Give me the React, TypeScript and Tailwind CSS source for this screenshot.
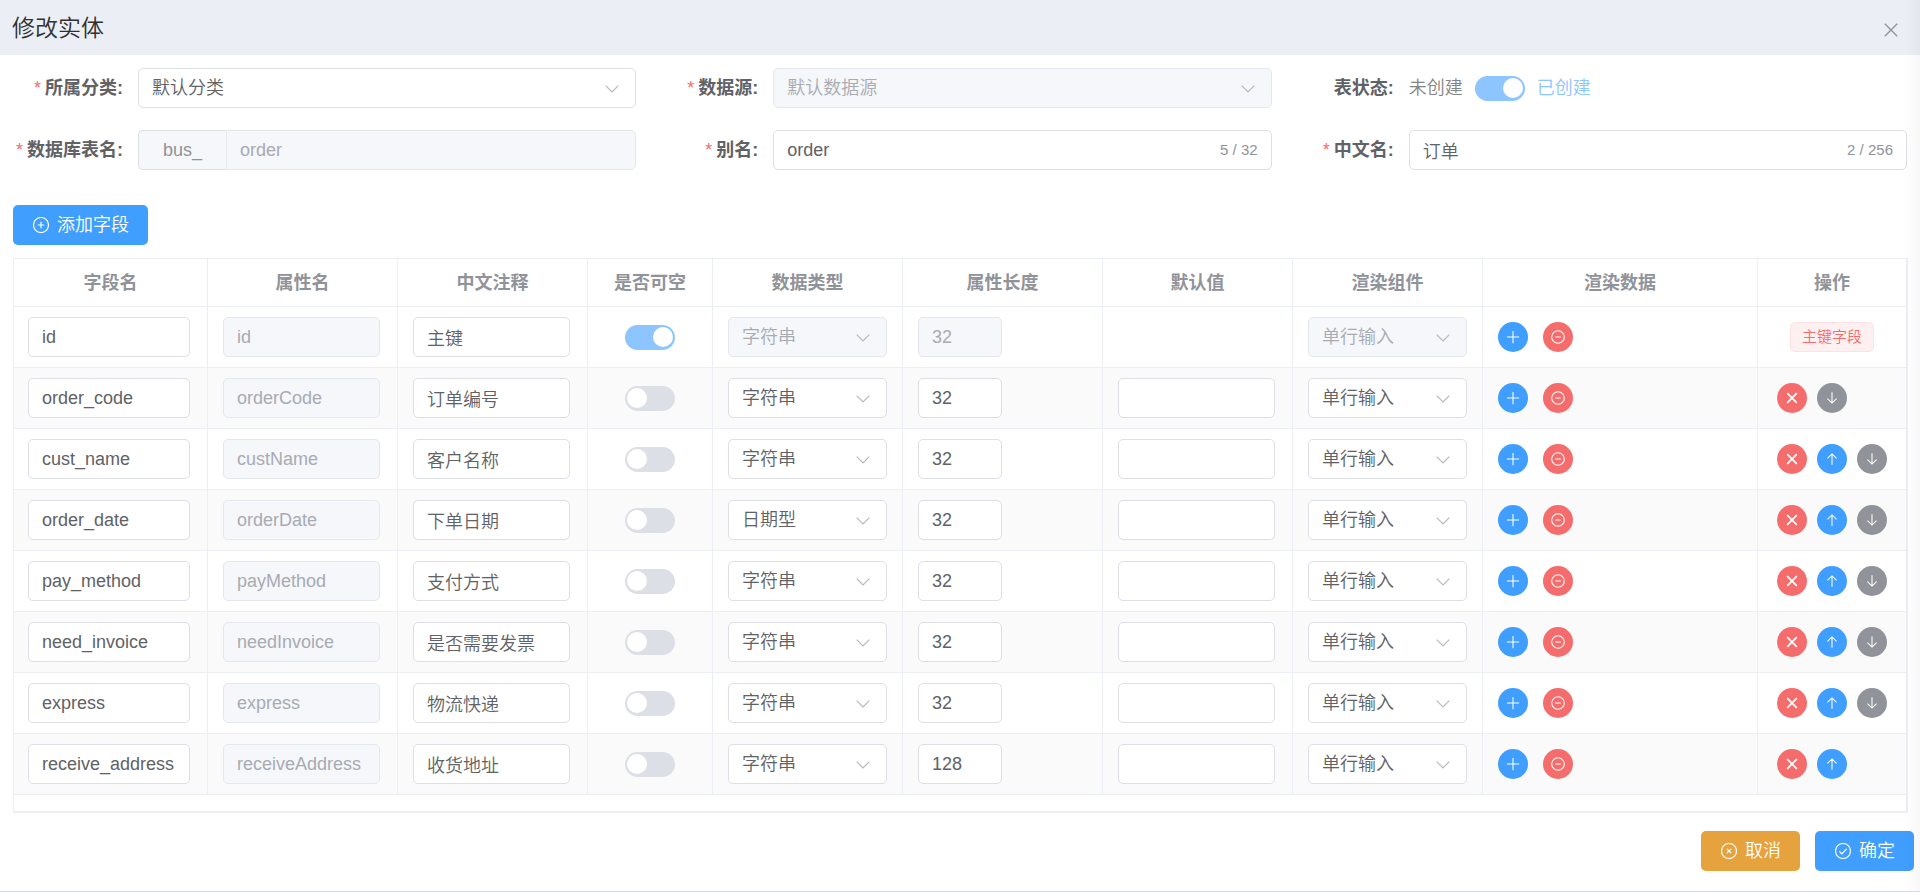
import type { ReactNode } from 'react';

type Field = {
  column: string;
  prop: string;
  comment: string;
  type: string;
  length: string;
};

const FIELDS: Field[] = [
  { column: 'id',              prop: 'id',             comment: '主键',         type: '字符串', length: '32' },
  { column: 'order_code',      prop: 'orderCode',      comment: '订单编号',     type: '字符串', length: '32' },
  { column: 'cust_name',       prop: 'custName',       comment: '客户名称',     type: '字符串', length: '32' },
  { column: 'order_date',      prop: 'orderDate',      comment: '下单日期',     type: '日期型', length: '32' },
  { column: 'pay_method',      prop: 'payMethod',      comment: '支付方式',     type: '字符串', length: '32' },
  { column: 'need_invoice',    prop: 'needInvoice',    comment: '是否需要发票', type: '字符串', length: '32' },
  { column: 'express',         prop: 'express',        comment: '物流快递',     type: '字符串', length: '32' },
  { column: 'receive_address', prop: 'receiveAddress', comment: '收货地址',     type: '字符串', length: '128' },
];

const COLUMNS = [
  { title: '字段名',   width: 'w-[194px]' },
  { title: '属性名',   width: 'w-[190px]' },
  { title: '中文注释', width: 'w-[190px]' },
  { title: '是否可空', width: 'w-[125px]' },
  { title: '数据类型', width: 'w-[190px]' },
  { title: '属性长度', width: 'w-[200px]' },
  { title: '默认值',   width: 'w-[190px]' },
  { title: '渲染组件', width: 'w-[190px]' },
  { title: '渲染数据', width: 'w-[275px]' },
  { title: '操作',     width: 'w-[148px]' },
];

const ICONS = {
  plus: 'M8 1v14M1 8h14',
  close: 'M2.5 2.5l11 11M13.5 2.5l-11 11',
  up: 'M8 14.5V2.2M2.8 7.4L8 2.2l5.2 5.2',
  down: 'M8 1.5v12.3M2.8 8.6L8 13.8l5.2-5.2',
  circlePlus: 'M8 .5a7.5 7.5 0 100 15 7.5 7.5 0 000-15zM8 4.8v6.4M4.8 8h6.4',
  circleMinus: 'M8 .8a7.2 7.2 0 100 14.4 7.2 7.2 0 000-14.4zM4.8 8h6.4',
  circleClose: 'M8 .5a7.5 7.5 0 100 15 7.5 7.5 0 000-15zM5.8 5.8l4.4 4.4M10.2 5.8l-4.4 4.4',
  circleCheck: 'M8 .5a7.5 7.5 0 100 15 7.5 7.5 0 000-15zM4.4 8.3l2.5 2.6 4.8-5',
};

function Icon({ name, className = 'size-4', stroke = 1.2 }: { name: keyof typeof ICONS; className?: string; stroke?: number }) {
  return (
    <svg viewBox="0 0 16 16" className={className} fill="none" stroke="currentColor" strokeWidth={stroke} aria-hidden="true">
      <path d={ICONS[name]} />
    </svg>
  );
}

function TextBox({ id, label, value, disabled, className = 'w-full' }: {
  id?: string; label?: string; value: string; disabled?: boolean; className?: string;
}) {
  return (
    <input
      id={id}
      aria-label={label}
      type="text"
      defaultValue={value}
      disabled={disabled}
      className={`block h-10 rounded-[5px] border border-[#dcdfe6] bg-white px-[13px] text-[#606266] outline-none disabled:border-[#e4e7ed] disabled:bg-[#f5f7fa] disabled:text-[#a8abb2] ${className}`}
    />
  );
}

function Select({ id, label, value, disabled }: { id?: string; label?: string; value: string; disabled?: boolean }) {
  return (
    <div className="relative">
      <select
        id={id}
        aria-label={label}
        defaultValue={value}
        disabled={disabled}
        className="block h-10 w-full appearance-none rounded-[5px] border border-[#dcdfe6] bg-white pl-[13px] pr-10 text-[#606266] opacity-100 outline-none disabled:border-[#e4e7ed] disabled:bg-[#f5f7fa] disabled:text-[#a8abb2]"
      >
        <option>{value}</option>
      </select>
      <svg viewBox="0 0 14 8" className="pointer-events-none absolute right-[17px] top-[17px] h-2 w-3.5 text-[#b4b8bf]" fill="none" stroke="currentColor" strokeWidth="1.2" aria-hidden="true">
        <path d="M.7.7L7 7 13.3.7" />
      </svg>
    </div>
  );
}

function Switch({ id, label, on, disabled }: { id?: string; label?: string; on?: boolean; disabled?: boolean }) {
  return (
    <label className="relative inline-flex h-[25px] w-[50px] items-center">
      <input id={id} type="checkbox" role="switch" aria-label={label} defaultChecked={on} disabled={disabled} className="peer absolute inset-0 opacity-0" />
      <span className="flex size-full items-center rounded-full bg-[#dcdfe6] px-[2px] peer-checked:justify-end peer-checked:bg-[#8cc5ff]">
        <span className="size-5 rounded-full bg-white" />
      </span>
    </label>
  );
}

function FormItem({ label, htmlFor, required, children }: { label: string; htmlFor: string; required?: boolean; children: ReactNode }) {
  return (
    <div className="flex items-center">
      <label htmlFor={htmlFor} className="w-[125px] shrink-0 whitespace-nowrap pr-[15px] text-right font-bold text-[#606266]">
        {required && <span className="mr-1 font-normal text-[#f56c6c]">*</span>}
        {label}:
      </label>
      <div className="min-w-0 flex-1">{children}</div>
    </div>
  );
}

function CountedBox({ id, value, max }: { id: string; value: string; max: number }) {
  return (
    <div className="relative">
      <TextBox id={id} value={value} />
      <span className="absolute inset-y-0 right-3.5 flex items-center text-[15px] text-[#909399]">{value.length} / {max}</span>
    </div>
  );
}

const ROUND_COLORS = {
  primary: 'bg-[#409eff]',
  danger: 'bg-[#f56c6c]',
  info: 'bg-[#909399]',
};

function RoundButton({ icon, color, label, stroke }: { icon: keyof typeof ICONS; color: keyof typeof ROUND_COLORS; label: string; stroke?: number }) {
  return (
    <button type="button" aria-label={label} className={`flex size-[30px] items-center justify-center rounded-full text-white ${ROUND_COLORS[color]}`}>
      <Icon name={icon} stroke={stroke} className="size-3.5" />
    </button>
  );
}

function FieldRow({ field, index, total }: { field: Field; index: number; total: number }) {
  const isKey = index === 0;
  const base = 'h-[61px] border-b border-r border-[#ebeef5]';
  const inputCell = `${base} pl-[15px] pr-[17px] first:pl-[14px]`;
  const selectCell = `${base} pl-[15px] pr-[15px]`;

  return (
    <tr className="even:bg-[#fafafa]">
      <td className={inputCell}><TextBox label="字段名" value={field.column} /></td>
      <td className={inputCell}><TextBox label="属性名" value={field.prop} disabled /></td>
      <td className={inputCell}><TextBox label="中文注释" value={field.comment} /></td>
      <td className={base}>
        <div className="flex justify-center"><Switch label="是否可空" on={isKey} disabled={isKey} /></div>
      </td>
      <td className={selectCell}><Select label="数据类型" value={field.type} disabled={isKey} /></td>
      <td className={inputCell}><TextBox label="属性长度" value={field.length} disabled={isKey} className="w-[84px]" /></td>
      <td className={inputCell}>{!isKey && <TextBox label="默认值" value="" />}</td>
      <td className={selectCell}><Select label="渲染组件" value="单行输入" disabled={isKey} /></td>
      <td className={selectCell}>
        <div className="flex gap-[15px]">
          <RoundButton icon="plus" color="primary" label="添加" />
          <RoundButton icon="circleMinus" color="danger" label="移除" />
        </div>
      </td>
      <td className="h-[61px] border-b border-[#ebeef5]">
        {isKey ? (
          <div className="flex justify-center">
            <span className="flex h-[30px] items-center rounded-[5px] border border-[#fde2e2] bg-[#fef0f0] px-[11px] text-[15px] text-[#f56c6c]">主键字段</span>
          </div>
        ) : (
          <div className="flex gap-2.5 pl-[19px]">
            <RoundButton icon="close" color="danger" label="删除" stroke={2} />
            {index > 1 && <RoundButton icon="up" color="primary" label="上移" />}
            {index < total - 1 && <RoundButton icon="down" color="info" label="下移" />}
          </div>
        )}
      </td>
    </tr>
  );
}

export default function App() {
  return (
    <div className="relative flex min-h-screen flex-col border-b border-[#d3dfe6] bg-white font-['Liberation_Sans','Noto_Sans_CJK_SC',sans-serif] text-[18px] font-[350] leading-6 text-[#606266]">
      <header className="flex h-[55px] items-center justify-between bg-[#ebeef5] pl-3 pr-5">
        <h1 className="text-[23px] text-[#303133]">修改实体</h1>
        <button type="button" aria-label="关闭" className="mt-1 text-[#909399]">
          <Icon name="close" className="size-[18px]" />
        </button>
      </header>

      <main className="pl-[13px] pr-3">
        <form className="mr-px grid grid-cols-3 gap-x-3 gap-y-[22px] pt-[13px]">
          <FormItem label="所属分类" htmlFor="category" required><Select id="category" value="默认分类" /></FormItem>
          <FormItem label="数据源" htmlFor="source" required><Select id="source" value="默认数据源" disabled /></FormItem>
          <FormItem label="表状态" htmlFor="status">
            <div className="flex items-center gap-3">
              <span className="text-[#838485]">未创建</span>
              <Switch id="status" on disabled />
              <span className="text-[#8cc5ff]">已创建</span>
            </div>
          </FormItem>
          <FormItem label="数据库表名" htmlFor="table" required>
            <div className="flex">
              <span className="flex h-10 items-center rounded-l-[5px] border border-r-0 border-[#dcdfe6] bg-[#f5f7fa] px-6 text-[#909399]">bus_</span>
              <TextBox id="table" value="order" disabled className="min-w-0 flex-1 rounded-l-none" />
            </div>
          </FormItem>
          <FormItem label="别名" htmlFor="alias" required><CountedBox id="alias" value="order" max={32} /></FormItem>
          <FormItem label="中文名" htmlFor="cn-name" required><CountedBox id="cn-name" value="订单" max={256} /></FormItem>
        </form>

        <button type="button" className="mt-[35px] flex h-10 items-center gap-2 rounded-[5px] bg-[#409eff] pl-5 pr-[19px] text-white">
          <Icon name="circlePlus" />添加字段
        </button>

        <div className="mt-[13px] border-b-2 border-l border-r-2 border-t border-[#ebeef5] pb-4">
          <table className="w-full table-fixed border-separate border-spacing-0">
            <thead>
              <tr>
                {COLUMNS.map((col) => (
                  <th key={col.title} className={`h-12 border-b border-r border-[#ebeef5] font-bold text-[#909399] last:border-r-0 ${col.width}`}>
                    {col.title}
                  </th>
                ))}
              </tr>
            </thead>
            <tbody>
              {FIELDS.map((field, i) => (
                <FieldRow key={field.column} field={field} index={i} total={FIELDS.length} />
              ))}
            </tbody>
          </table>
        </div>
      </main>

      <footer className="flex justify-end gap-[15px] pb-5 pr-1.5 pt-[18px]">
        <button type="button" className="flex h-10 items-center gap-2 rounded-[5px] bg-[#e6a23c] pl-5 pr-[19px] text-white">
          <Icon name="circleClose" />取消
        </button>
        <button type="button" className="flex h-10 items-center gap-2 rounded-[5px] bg-[#409eff] pl-5 pr-[19px] text-white">
          <Icon name="circleCheck" />确定
        </button>
      </footer>

      {/* soft shade along the drawer's right edge */}
      <div className="pointer-events-none absolute inset-y-0 right-0 w-4 bg-gradient-to-r from-transparent to-black/3" />
    </div>
  );
}
